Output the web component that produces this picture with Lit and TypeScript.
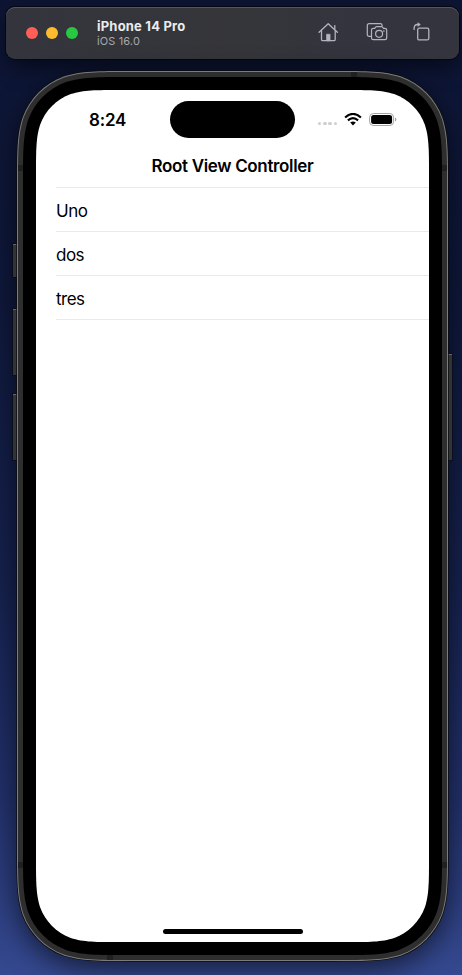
import { LitElement, html, svg, css } from "lit";
import { customElement } from "lit/decorators.js";

/** Rounded rectangle with continuous-curvature corners. */
function smoothRect(x: number, y: number, w: number, h: number, r: number): string {
  const a = 1.528665 * r, b = 1.088493 * r, c = 0.868407 * r, d = 0.631494 * r;
  const e = 0.074911 * r, f = 0.372824 * r, g = 0.16906 * r;
  const R = x + w, B = y + h;
  return [
    `M${x + a} ${y}H${R - a}`,
    `C${R - b} ${y} ${R - c} ${y} ${R - d} ${y + e}`,
    `C${R - f} ${y + g} ${R - g} ${y + f} ${R - e} ${y + d}`,
    `C${R} ${y + c} ${R} ${y + b} ${R} ${y + a}V${B - a}`,
    `C${R} ${B - b} ${R} ${B - c} ${R - e} ${B - d}`,
    `C${R - g} ${B - f} ${R - f} ${B - g} ${R - d} ${B - e}`,
    `C${R - c} ${B} ${R - b} ${B} ${R - a} ${B}H${x + a}`,
    `C${x + b} ${B} ${x + c} ${B} ${x + d} ${B - e}`,
    `C${x + f} ${B - g} ${x + g} ${B - f} ${x + e} ${B - d}`,
    `C${x} ${B - c} ${x} ${B - b} ${x} ${B - a}V${y + a}`,
    `C${x} ${y + b} ${x} ${y + c} ${x + e} ${y + d}`,
    `C${x + g} ${y + f} ${x + f} ${y + g} ${x + d} ${y + e}`,
    `C${x + c} ${y} ${x + b} ${y} ${x + a} ${y}Z`,
  ].join("");
}

const homeIcon = svg`<svg width="22" height="22" viewBox="0 0 22 22" fill="none" stroke="#b4b4bf" stroke-width="1.3" stroke-linejoin="round" stroke-linecap="round">
  <path d="M1.1 11.2 L10.2 2.7 L19.4 11.2"/><path d="M3.5 9.6V18.4Q3.5 19.7 4.8 19.7H15.9Q17.2 19.7 17.2 18.4V9.6"/>
  <path d="M16.8 8.3V4.6"/><path d="M8.5 19.5V13.2H12.1V19.5Z" fill="#b4b4bf" stroke-width=".6"/></svg>`;
const cameraIcon = svg`<svg width="22" height="20" viewBox="0 0 22 20" fill="none" stroke="#b4b4bf" stroke-width="1.2" stroke-linejoin="round" stroke-linecap="round">
  <path d="M4.6 14.4H3.1Q1.3 14.4 1.3 12.6V3.4Q1.3 1.7 3.1 1.7H14.3Q16 1.7 16.2 3.6"/>
  <path d="M7.3 6.4H8.7L9.9 4.9Q10.2 4.6 10.7 4.6H15.5Q16 4.6 16.3 4.9L17.5 6.4H18.9Q20.7 6.4 20.7 8.1V16Q20.7 17.7 18.9 17.7H7.3Q5.5 17.7 5.5 16V8.1Q5.5 6.4 7.3 6.4Z"/>
  <circle cx="13.1" cy="11.8" r="3.5"/><circle cx="17.8" cy="9" r=".45" fill="#b4b4bf" stroke-width=".5"/></svg>`;
const rotateIcon = svg`<svg width="18" height="20" viewBox="0 0 18 20" fill="none" stroke="#b4b4bf" stroke-width="1.3" stroke-linejoin="round" stroke-linecap="round">
  <rect x="4.7" y="6.2" width="11.1" height="11.7" rx="1.5"/><path d="M1.1 7.4V6.3Q1.1 2.5 4.6 2.5H6.6"/><path d="M5.1 .9L7.3 2.5L5.1 4.2Z" fill="#b4b4bf" stroke-width=".6"/></svg>`;
const wifiIcon = svg`<svg width="18" height="13" viewBox="0 0 18 13" fill="none" stroke="#000">
  <path d="M1.1 4.5Q9-2.6 16.9 4.5" stroke-width="2.2"/><path d="M3.9 7.4Q9 2.9 14.1 7.4" stroke-width="2.1"/>
  <path d="M6.2 9.5Q9 7.3 11.8 9.5L9 12.5Z" fill="#000" stroke="none"/></svg>`;
const batteryIcon = svg`<svg width="28" height="13" viewBox="0 0 28 13">
  <rect x=".6" y=".5" width="24" height="12" rx="3.8" fill="none" stroke="#a3a3a3"/>
  <rect x="2.1" y="2" width="21" height="9" rx="2.5"/><path d="M26 4.5Q27.4 5.1 27.4 6.5Q27.4 7.9 26 8.5Z" fill="#a3a3a3"/></svg>`;

@customElement("sim-toolbar")
class SimToolbar extends LitElement {
  static styles = css`
    :host { display: flex; align-items: center; box-sizing: border-box; width: 453px; height: 52px; margin: 7px 0 0 6px;
      padding: 0 28px 2px 20px; border-radius: 9px; background: linear-gradient(90deg, #34343d, #353639 52%, #33343e 78%);
      box-shadow: 0 0 0 1px #050811, inset 0 1px 0 #55565b, 0 8px 20px rgba(0,0,0,.5); }
    .lights { display: flex; gap: 8px; margin-top: 2px; }
    .dot { width: 12px; height: 12px; border-radius: 50%; }
    .red { background: #ff5f57; } .amber { background: #febb2e; } .green { background: #28c840; }
    .label { margin: 2px 0 0 19px; flex: 1; white-space: nowrap; }
    .name { font-size: 13px; line-height: 15px; font-weight: 700; color: #ececee; letter-spacing: .2px; }
    .os { font-size: 11px; line-height: 14px; color: #a7a8ae; letter-spacing: .12px; }
    svg { display: block; }
    .icons { display: flex; align-items: center; width: 113px; justify-content: space-between; }
  `;
  render() {
    return html`<div class="lights"><div class="dot red"></div><div class="dot amber"></div><div class="dot green"></div></div>
      <div class="label"><div class="name">iPhone 14 Pro</div><div class="os">iOS 16.0</div></div>
      <div class="icons">${homeIcon}${cameraIcon}${rotateIcon}</div>`;
  }
}

@customElement("phone-screen")
class PhoneScreen extends LitElement {
  static styles = css`
    :host { display: flex; flex-direction: column; width: 393px; height: 852px; color: #000; }
    .status { display: grid; grid-template-columns: 134px 125px 134px; height: 54px; padding-top: 1px; box-sizing: border-box; }
    .time { padding: 18px 0 0 53px; font-size: 17px; line-height: 22px; font-weight: 600; letter-spacing: -.2px; }
    .island { margin-top: 10px; height: 37px; border-radius: 19px; background: #000; }
    .signals { display: flex; padding: 22px 0 0 22.5px; }
    .cells { display: flex; gap: 1.6px; padding-top: 8.7px; width: 26px; }
    .cell { width: 3.8px; height: 3.8px; border-radius: 1.5px; background: #cfcfcf; }
    .battery { margin-left: 7px; }
    svg { display: block; }
    .title { height: 43px; line-height: 44px; text-align: center; font-size: 17px; font-weight: 600; letter-spacing: -.34px; }
    .list { flex: 1; padding-left: 20px; }
    .row { height: 44px; box-sizing: border-box; line-height: 46px; border-bottom: 1px solid #e9e9ea; font-size: 17px; letter-spacing: -.5px; }
    .row.first { border-top: 1px solid #e9e9ea; height: 45px; }
    .home { width: 140px; height: 5px; border-radius: 3px; background: #000; margin: 0 auto 8px; }
  `;
  render() {
    return html`<div class="status"><div class="time">8:24</div><div class="island"></div>
      <div class="signals"><div class="cells">${[0, 1, 2, 3].map(() => html`<div class="cell"></div>`)}</div>
        ${wifiIcon}<div class="battery">${batteryIcon}</div></div></div>
      <div class="title">Root View Controller</div>
      <div class="list">${["Uno", "dos", "tres"].map((t, i) => html`<div class="row ${i === 0 ? "first" : ""}">${t}</div>`)}</div>
      <div class="home"></div>`;
  }
}

@customElement("app-root")
class AppRoot extends LitElement {
  static styles = css`
    :host { display: block; box-sizing: border-box; width: 462px; height: 975px; overflow: hidden; font-family: Inter, "Liberation Sans", sans-serif;
      background: linear-gradient(180deg, #0d1534 0, #0f183b 30%, #16224f 60%, #22316c 82%, #354990 100%); }
    .device { position: relative; width: 462px; height: 916px; }
    .frame { position: absolute; left: 0; top: 0; overflow: visible; }
    .glass { position: relative; padding: 31px 0 0 36px; }
    .shadow { filter: drop-shadow(0 8px 14px rgba(0,0,0,.6)); }
  `;
  render() {
    const buttons = [[13, 185, 33], [13, 250, 66], [13, 335, 66], [447, 295, 106]];
    return html`<sim-toolbar></sim-toolbar>
      <div class="device">
        <svg class="frame" width="462" height="916" viewBox="0 0 462 916">
          <g class="shadow"><path d=${smoothRect(17, 12, 431, 890, 74)} /></g>
          ${buttons.map(([x, y, h]) => svg`<rect x=${x - 0.5} y=${y - 0.5} width="6" height=${h + 1} fill="#05070e"/>
            <rect x=${x} y=${y} width="5" height=${h} fill="#323333"/><rect x=${x} y=${y} width="5" height="1" fill="#646666"/>`)}
          <path d=${smoothRect(16.3, 11.3, 432.4, 891.4, 74.5)} fill="#0b0c10"/>
          <path d=${smoothRect(17, 12, 431, 890, 74)} fill="#7b7b7a"/>
          <path d=${smoothRect(18, 13, 429, 888, 73)} fill="#2e2e2e"/>
          <path d="M351 13h6v5h-6zM107 896h6v5h-6zM18 106h5v6h-5zM442 106h5v6h-5zM18 803h5v6h-5zM442 803h5v6h-5z" fill="#202020"/>
          <path d=${smoothRect(23, 18, 419, 878, 68)} fill="#000"/>
          <path d=${smoothRect(36, 31, 393, 852, 55)} fill="#fff"/>
        </svg>
        <div class="glass"><phone-screen></phone-screen></div>
      </div>`;
  }
}
